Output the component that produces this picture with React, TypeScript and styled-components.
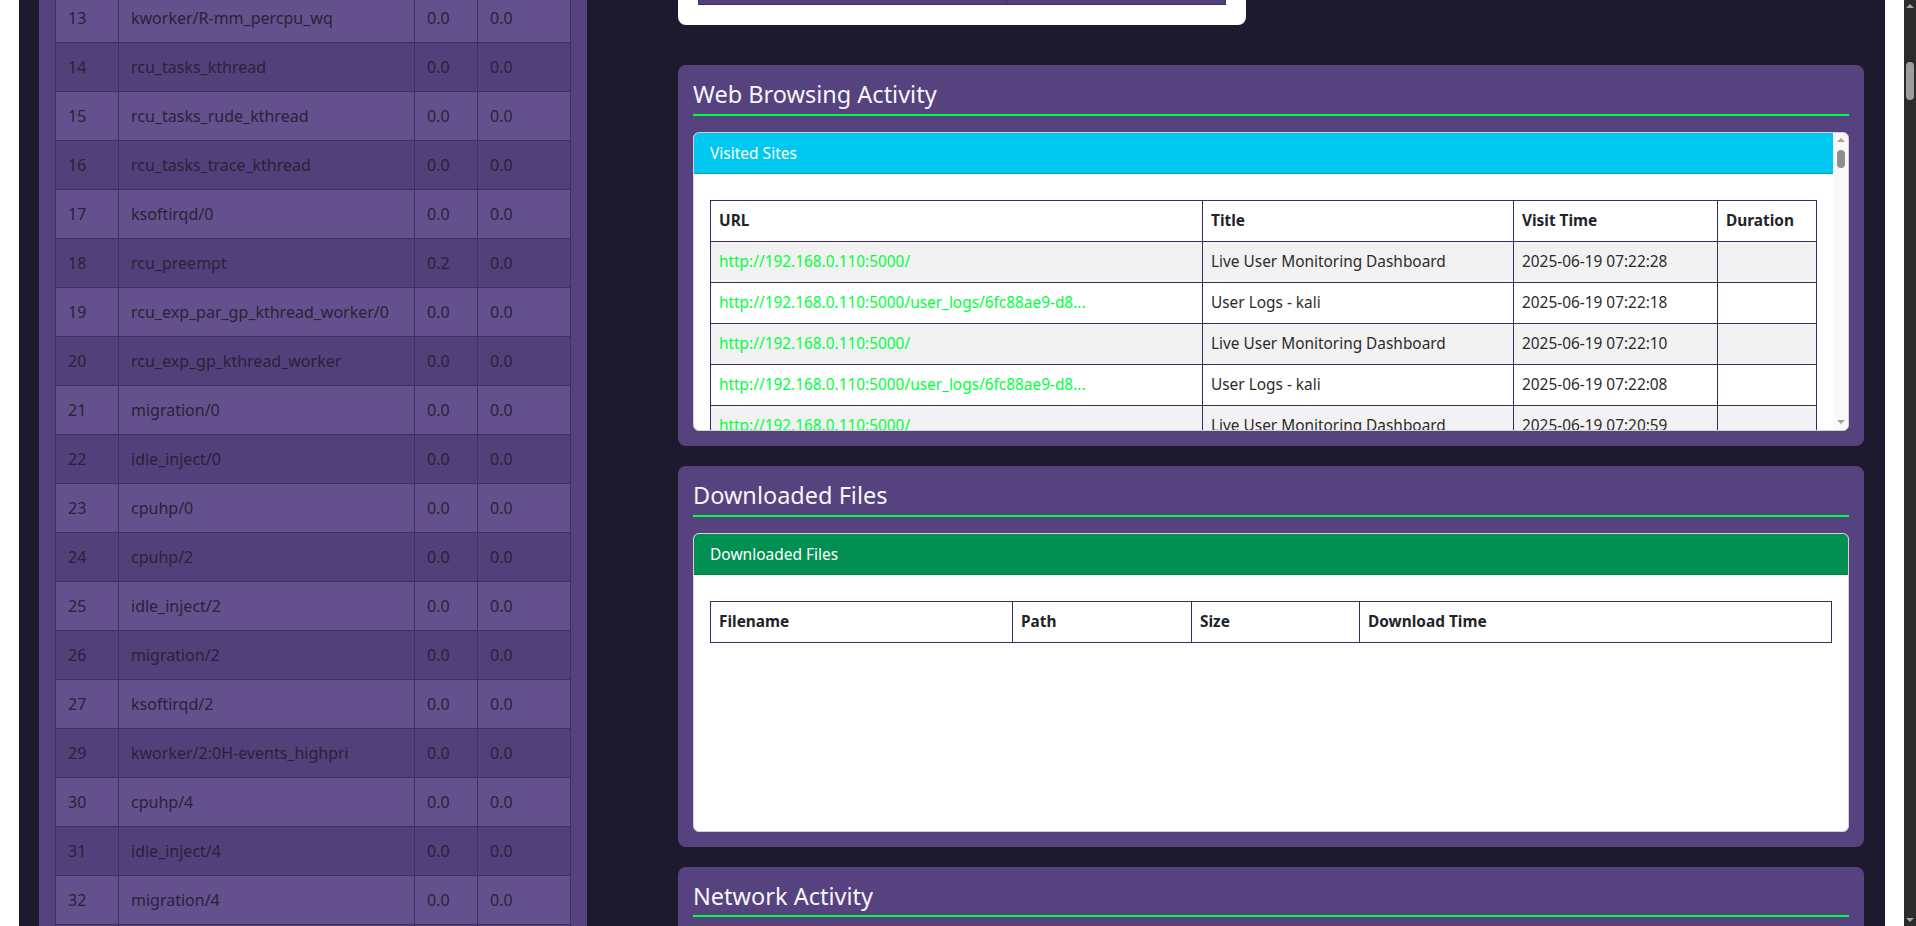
import React, { useLayoutEffect, useRef } from 'react';
import styled, { createGlobalStyle } from 'styled-components';

const GlobalStyle = createGlobalStyle`
  html, body {
    margin: 0;
    padding: 0;
    height: 100%;
    overflow: hidden;
    background: #fff;
  }
  body {
    font-family: "Noto Sans", "DejaVu Sans", sans-serif;
    font-size: 16px;
    line-height: 1.5;
    color: #212529;
  }
  #root {
    height: 100%;
  }
  *, *::before, *::after {
    box-sizing: border-box;
  }
`;

const Viewport = styled.div`
  display: flex;
  height: 100vh;
`;

const PageArea = styled.div`
  flex: 1;
  min-width: 0;
  padding: 0 19px;
  background: #fff;
`;

const Dashboard = styled.div`
  height: 100%;
  overflow: hidden;
  background: #1e1a2e;
`;

const Columns = styled.div`
  display: grid;
  grid-template-columns: 548px 1fr;
  column-gap: 91px;
  align-items: start;
  padding: 0 21px 40px 20px;
`;

const RightColumn = styled.div`
  display: flex;
  flex-direction: column;
  gap: 20px;
`;

const Panel = styled.section`
  background: #55427e;
  border-radius: 8px;
  padding: 15px;
`;

const ProcessPanel = styled(Panel)`
  padding: 16px;
`;

const PanelTitle = styled.h4`
  margin: 0 0 16px;
  padding-bottom: 5px;
  border-bottom: 2px solid #00ff41;
  font-size: 23.5px;
  font-weight: 400;
  line-height: 28.8px;
  color: #f7f5fb;
`;

const SummaryCard = styled.div`
  width: 568px;
  margin-bottom: 20px;
  padding: 27px 20px 20px;
  background: #fff;
  border-radius: 8px;
`;

const PurpleTable = styled.table`
  width: 100%;
  border-collapse: collapse;
  table-layout: fixed;
  color: #28223a;

  td {
    padding: 12px;
    line-height: 24px;
    border: 1px solid #3e305f;
    white-space: nowrap;
    overflow: hidden;
  }

  tr:nth-child(odd) td {
    background: #64508c;
  }

  tr:nth-child(even) td {
    background: #52407b;
  }
`;

const Col = styled.col<{ $w?: number }>`
  width: ${p => (p.$w ? `${p.$w}px` : 'auto')};
`;

const InnerCard = styled.div<{ $height: number }>`
  display: flex;
  height: ${p => p.$height}px;
  background: #fff;
  border: 1px solid #d3d0da;
  border-radius: 6px;
  overflow: hidden;
`;

const CardMain = styled.div`
  flex: 1;
  min-width: 0;
  overflow: hidden;
`;

const CardHeader = styled.div<{ $tone: 'info' | 'success' }>`
  padding: 8px 16px;
  background: ${p => (p.$tone === 'info' ? '#00c8f0' : '#019052')};
  border-bottom: 1px solid rgba(0, 0, 0, 0.16);
  color: #fff;
  font-size: 15.5px;
  line-height: 24px;
`;

const CardBody = styled.div`
  padding: 26px 16px 16px;
`;

const DataTable = styled.table`
  width: 100%;
  border-collapse: collapse;
  table-layout: fixed;
  font-size: 15.4px;

  th,
  td {
    padding: 8px;
    line-height: 24px;
    text-align: left;
    border: 1px solid #3a2d5c;
    white-space: nowrap;
    overflow: hidden;
  }

  th {
    font-weight: 700;
    color: #212529;
    background: #fff;
  }

  td {
    color: #2b2b2b;
  }

  tbody tr:nth-child(odd) td {
    background: #f2f2f2;
  }

  tbody tr:nth-child(even) td {
    background: #fff;
  }
`;

const UrlText = styled.span`
  color: #00ff41;
`;

const ScrollTrack = styled.div<{ $width: number; $dark?: boolean }>`
  flex: none;
  width: ${p => p.$width}px;
  display: flex;
  flex-direction: column;
  align-items: center;
  background: ${p => (p.$dark ? '#2b2b2b' : '#f9f9f9')};
`;

const ScrollArrow = styled.div<{ $dir: 'up' | 'down'; $size: number; $color: string }>`
  flex: none;
  width: 100%;
  height: ${p => p.$size}px;
  display: flex;
  align-items: center;
  justify-content: center;

  &::before {
    content: '';
    border-left: 4px solid transparent;
    border-right: 4px solid transparent;
    ${p =>
      p.$dir === 'up'
        ? `border-bottom: 4px solid ${p.$color};`
        : `border-top: 4px solid ${p.$color};`}
  }
`;

const ScrollThumb = styled.div<{ $offset: number; $length: number; $color: string }>`
  flex: none;
  margin-top: ${p => p.$offset}px;
  width: 8px;
  height: ${p => p.$length}px;
  border-radius: 4px;
  background: ${p => p.$color};
`;

const ScrollRest = styled.div`
  flex: 1;
`;

interface ScrollbarProps {
  width: number;
  arrow: number;
  offset: number;
  length: number;
  dark?: boolean;
}

const Scrollbar: React.FC<ScrollbarProps> = ({ width, arrow, offset, length, dark }) => {
  const arrowColor = dark ? '#a3a3a3' : '#a0a0a0';
  const thumbColor = dark ? '#9d9d9d' : '#8f8f8f';
  return (
    <ScrollTrack $width={width} $dark={dark}>
      <ScrollArrow $dir="up" $size={arrow} $color={arrowColor} />
      <ScrollThumb $offset={offset} $length={length} $color={thumbColor} />
      <ScrollRest />
      <ScrollArrow $dir="down" $size={arrow} $color={arrowColor} />
    </ScrollTrack>
  );
};

const processes: [number, string, string, string][] = [
  [11, 'kworker/R-slub_flushwq', '0.0', '0.0'],
  [12, 'kworker/R-netns', '0.0', '0.0'],
  [13, 'kworker/R-mm_percpu_wq', '0.0', '0.0'],
  [14, 'rcu_tasks_kthread', '0.0', '0.0'],
  [15, 'rcu_tasks_rude_kthread', '0.0', '0.0'],
  [16, 'rcu_tasks_trace_kthread', '0.0', '0.0'],
  [17, 'ksoftirqd/0', '0.0', '0.0'],
  [18, 'rcu_preempt', '0.2', '0.0'],
  [19, 'rcu_exp_par_gp_kthread_worker/0', '0.0', '0.0'],
  [20, 'rcu_exp_gp_kthread_worker', '0.0', '0.0'],
  [21, 'migration/0', '0.0', '0.0'],
  [22, 'idle_inject/0', '0.0', '0.0'],
  [23, 'cpuhp/0', '0.0', '0.0'],
  [24, 'cpuhp/2', '0.0', '0.0'],
  [25, 'idle_inject/2', '0.0', '0.0'],
  [26, 'migration/2', '0.0', '0.0'],
  [27, 'ksoftirqd/2', '0.0', '0.0'],
  [29, 'kworker/2:0H-events_highpri', '0.0', '0.0'],
  [30, 'cpuhp/4', '0.0', '0.0'],
  [31, 'idle_inject/4', '0.0', '0.0'],
  [32, 'migration/4', '0.0', '0.0'],
  [33, 'ksoftirqd/4', '0.0', '0.0'],
];

const dashUrl = 'http://192.168.0.110:5000/';
const logsUrl = 'http://192.168.0.110:5000/user_logs/6fc88ae9-d8...';

const visits = [
  { url: dashUrl, title: 'Live User Monitoring Dashboard', time: '2025-06-19 07:22:28' },
  { url: logsUrl, title: 'User Logs - kali', time: '2025-06-19 07:22:18' },
  { url: dashUrl, title: 'Live User Monitoring Dashboard', time: '2025-06-19 07:22:10' },
  { url: logsUrl, title: 'User Logs - kali', time: '2025-06-19 07:22:08' },
  { url: dashUrl, title: 'Live User Monitoring Dashboard', time: '2025-06-19 07:20:59' },
  { url: logsUrl, title: 'User Logs - kali', time: '2025-06-19 07:20:51' },
  { url: dashUrl, title: 'Live User Monitoring Dashboard', time: '2025-06-19 07:19:44' },
];

export default function App() {
  const scrollRef = useRef<HTMLDivElement>(null);

  // the page is shown scrolled down a little
  useLayoutEffect(() => {
    if (scrollRef.current) scrollRef.current.scrollTop = 121;
  }, []);

  return (
    <>
      <GlobalStyle />
      <Viewport>
        <PageArea>
          <Dashboard ref={scrollRef}>
            <Columns>
              <ProcessPanel>
                <PurpleTable>
                  <colgroup>
                    <Col $w={63} />
                    <Col $w={296} />
                    <Col $w={63} />
                    <Col />
                  </colgroup>
                  <tbody>
                    {processes.map(([pid, name, cpu, mem]) => (
                      <tr key={pid}>
                        <td>{pid}</td>
                        <td>{name}</td>
                        <td>{cpu}</td>
                        <td>{mem}</td>
                      </tr>
                    ))}
                  </tbody>
                </PurpleTable>
              </ProcessPanel>

              <RightColumn>
                <SummaryCard>
                  <PurpleTable>
                    <colgroup>
                      <Col $w={308} />
                      <Col />
                    </colgroup>
                    <tbody>
                      <tr>
                        <td>Logged in users</td>
                        <td>1</td>
                      </tr>
                      <tr>
                        <td>Session</td>
                        <td>kali</td>
                      </tr>
                    </tbody>
                  </PurpleTable>
                </SummaryCard>

                <Panel>
                  <PanelTitle>Web Browsing Activity</PanelTitle>
                  <InnerCard $height={299}>
                    <CardMain>
                      <CardHeader $tone="info">Visited Sites</CardHeader>
                      <CardBody>
                        <DataTable>
                          <colgroup>
                            <Col $w={492} />
                            <Col $w={311} />
                            <Col $w={204} />
                            <Col />
                          </colgroup>
                          <thead>
                            <tr>
                              <th>URL</th>
                              <th>Title</th>
                              <th>Visit Time</th>
                              <th>Duration</th>
                            </tr>
                          </thead>
                          <tbody>
                            {visits.map(v => (
                              <tr key={v.time}>
                                <td>
                                  <UrlText>{v.url}</UrlText>
                                </td>
                                <td>{v.title}</td>
                                <td>{v.time}</td>
                                <td></td>
                              </tr>
                            ))}
                          </tbody>
                        </DataTable>
                      </CardBody>
                    </CardMain>
                    <Scrollbar width={15} arrow={15} offset={2} length={18} />
                  </InnerCard>
                </Panel>

                <Panel>
                  <PanelTitle>Downloaded Files</PanelTitle>
                  <InnerCard $height={299}>
                    <CardMain>
                      <CardHeader $tone="success">Downloaded Files</CardHeader>
                      <CardBody>
                        <DataTable>
                          <colgroup>
                            <Col $w={302} />
                            <Col $w={179} />
                            <Col $w={168} />
                            <Col />
                          </colgroup>
                          <thead>
                            <tr>
                              <th>Filename</th>
                              <th>Path</th>
                              <th>Size</th>
                              <th>Download Time</th>
                            </tr>
                          </thead>
                          <tbody></tbody>
                        </DataTable>
                      </CardBody>
                    </CardMain>
                  </InnerCard>
                </Panel>

                <Panel>
                  <PanelTitle>Network Activity</PanelTitle>
                  <InnerCard $height={299}>
                    <CardMain>
                      <CardHeader $tone="info">Active Connections</CardHeader>
                    </CardMain>
                  </InnerCard>
                </Panel>
              </RightColumn>
            </Columns>
          </Dashboard>
        </PageArea>
        <Scrollbar width={12} arrow={12} offset={50} length={38} dark />
      </Viewport>
    </>
  );
}
